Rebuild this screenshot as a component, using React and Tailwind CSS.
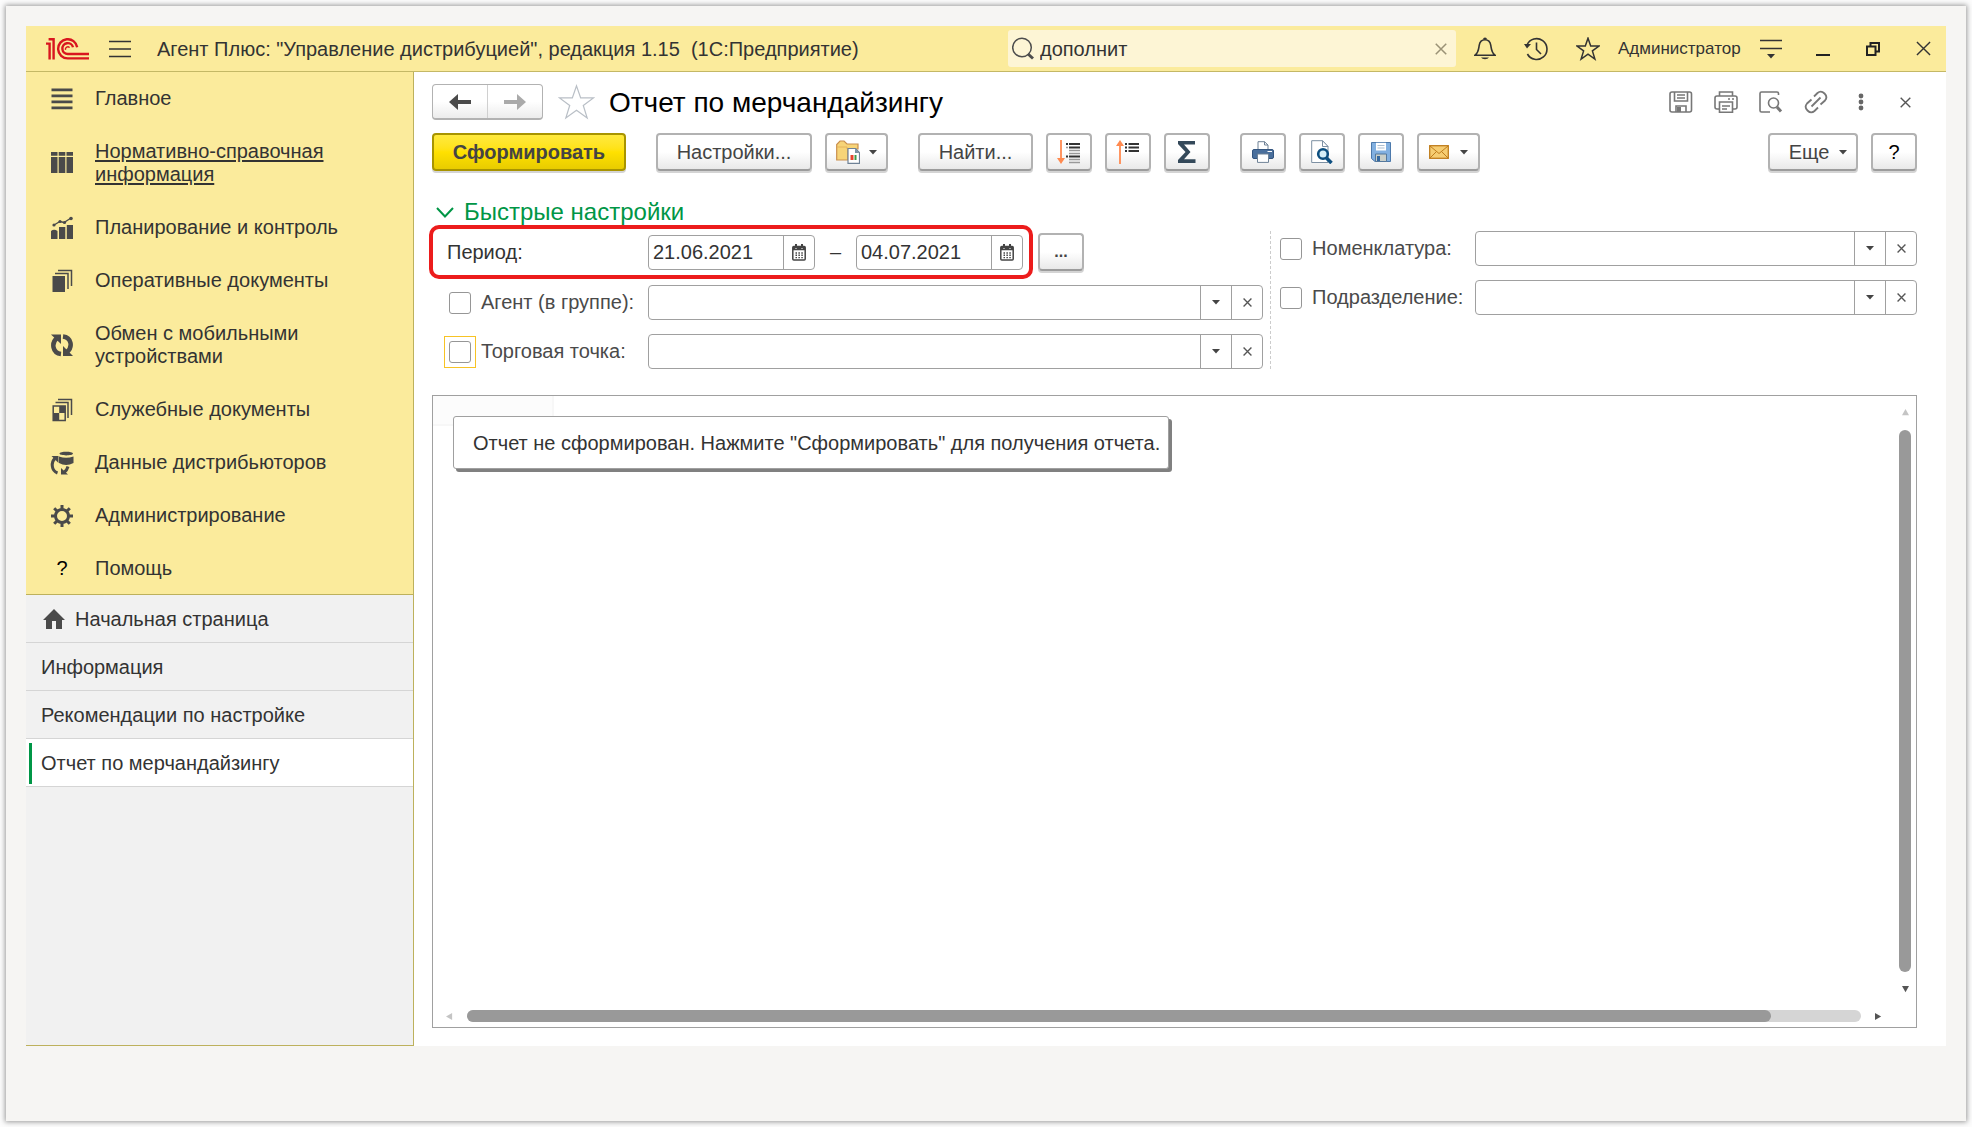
import { useState } from "react";

/* ---------- icons ---------- */

function Logo() {
  return (
    <svg width="44" height="22" viewBox="0 0 44 22" fill="none" stroke="#d9161f" strokeWidth="2.4">
      <path d="M1 5.6H4.6V21.5M3.6 1.2H8.6V21.5" />
      <path d="M32.2 9.2A9.6 9.6 0 1 0 22.8 20.4H44" />
      <path d="M28 9.2A5.4 5.4 0 1 0 22.8 16H44" />
      <path d="M20.5 11.8A2.4 2.4 0 0 1 24.6 9.6" strokeWidth="1.4" />
    </svg>
  );
}

function Burger() {
  return (
    <svg width="22" height="18" viewBox="0 0 22 18" stroke="#333" strokeWidth="1.6">
      <path d="M0 1.5H22M0 9H22M0 16.5H22" />
    </svg>
  );
}

function Cross({ size = 16, color = "#333", width = 1.5 }) {
  return (
    <svg width={size} height={size} viewBox="0 0 16 16" stroke={color} strokeWidth={width}>
      <path d="M1 1L15 15M15 1L1 15" />
    </svg>
  );
}

function Caret() {
  return (
    <svg width="8" height="5" viewBox="0 0 8 5" fill="#444">
      <path d="M0 0H8L4 4.6Z" />
    </svg>
  );
}

function Star({ size, color, width }) {
  return (
    <svg width={size} height={size} viewBox="0 0 24 24" fill="none" stroke={color} strokeWidth={width}>
      <path d="M12 1.2L14.7 9H23L16.4 13.9L18.9 22L12 17.1L5.1 22L7.6 13.9L1 9H9.3Z" />
    </svg>
  );
}

function Magnifier() {
  return (
    <svg width="22" height="23" viewBox="0 0 22 23" fill="none" stroke="#4d4d4d">
      <circle cx="10" cy="10.5" r="9.3" strokeWidth="1.5" />
      <path d="M16 17L21 21.5" strokeWidth="3" />
    </svg>
  );
}

function Bell() {
  return (
    <svg width="22" height="24" viewBox="0 0 22 24" fill="none" stroke="#333" strokeWidth="1.6">
      <path d="M1 18.2C4.6 15.6 4.6 12 5.2 8.4C5.8 4.6 8 2.8 11 2.8S16.2 4.6 16.8 8.4C17.4 12 17.4 15.6 21 18.2Z" />
      <path d="M9 2.6A2 2 0 0 1 13 2.6Z" fill="#333" stroke="none" />
      <path d="M7 20.5H15A4.4 3 0 0 1 7 20.5Z" fill="#333" stroke="none" />
    </svg>
  );
}

function History() {
  return (
    <svg width="24" height="24" viewBox="0 0 24 24" fill="none" stroke="#333" strokeWidth="1.6">
      <path d="M3 8A10.4 10.4 0 1 1 3.4 17" />
      <path d="M12.5 5.5V12.5L17 17" />
      <path d="M0 7H7L3 11.5Z" fill="#333" stroke="none" />
    </svg>
  );
}

function ServiceMenu() {
  return (
    <svg width="22" height="20" viewBox="0 0 22 20" stroke="#333" strokeWidth="1.6">
      <path d="M0 1.5H22M0 9.5H22" />
      <path d="M7 15H15L11 19.5Z" fill="#333" stroke="none" />
    </svg>
  );
}

function Minimize() {
  return (
    <svg width="14" height="16" viewBox="0 0 14 16" stroke="#222" strokeWidth="2">
      <path d="M0 14H14" />
    </svg>
  );
}

function Restore() {
  return (
    <svg width="14" height="14" viewBox="0 0 14 14" fill="none" stroke="#222" strokeWidth="2">
      <path d="M1 4.5H9.5V13H1ZM4.5 4.5V1H13V9.5H9.5" />
    </svg>
  );
}

const side = { width: 24, height: 24, viewBox: "0 0 24 24", fill: "#4a4a4a", className: "shrink-0" };

const sideIcons = {
  main: (
    <svg {...side}>
      <path d="M1.500 1.500H22.500V4.200H1.500ZM1.500 7.500H22.500V10.200H1.500ZM1.500 13.500H22.500V16.200H1.500ZM1.500 19.500H22.500V22.200H1.500Z" />
    </svg>
  ),
  columns: (
    <svg {...side}>
      <path d="M1 1H7.500V4.800H1ZM8.700 1H15.300V4.800H8.700ZM16.500 1H23V4.800H16.500ZM1 6H7.500V22H1ZM8.700 6H15.300V22H8.700ZM16.500 6H23V22H16.500Z" />
    </svg>
  ),
  chart: (
    <svg {...side}>
      <path d="M1 15Q4 12.500 7.500 15V23H1ZM9 11H15.300V23H9ZM16.800 9H23V23H16.800Z" />
      <path d="M4 9L10 5.500L14 6.500L21 2" fill="none" stroke="#4a4a4a" strokeWidth="1.300" />
      <circle cx="4" cy="9" r="1.600" />
      <circle cx="10" cy="5.500" r="1.600" />
      <circle cx="14.500" cy="6.500" r="1.600" />
      <circle cx="21" cy="2.500" r="1.800" />
    </svg>
  ),
  docs: (
    <svg {...side}>
      <path d="M2.500 7H15V23H2.500Z" />
      <path d="M5 4.500H18V20M8 1.500H21.500V17" fill="none" stroke="#4a4a4a" strokeWidth="1.500" />
    </svg>
  ),
  sync: (
    <svg {...side}>
      <path d="M11 21C2.500 20 1 10 7 5" fill="none" stroke="#4a4a4a" strokeWidth="4.500" />
      <path d="M1 1.500H11V11Z" />
      <path d="M13 3.500C21.500 4.500 23 14 17 19" fill="none" stroke="#4a4a4a" strokeWidth="4.500" />
      <path d="M13 13V23H23Z" />
    </svg>
  ),
  service: (
    <svg {...side}>
      <path d="M5.500 4.500H18V20M8 1.500H21.500V17M3.200 8H15.200V22.500H3.200Z" fill="none" stroke="#4a4a4a" strokeWidth="1.500" />
      <path d="M9.200 8H15V15H9.200ZM3.200 15H9.200V22.500H3.200Z" />
    </svg>
  ),
  distributors: (
    <svg {...side}>
      <path d="M9.500 2.500C9.500 0 23 0 23 2.500S9.500 5 9.500 2.500ZM9 5.500Q16 8 23.500 5.500V12Q16 16 9 12Z" />
      <path d="M7.500 22C1 19.500 1 11 5 7.500" fill="none" stroke="#4a4a4a" strokeWidth="3" />
      <path d="M1.500 5H8.500V12Z" />
      <path d="M18 15.500Q17 19 14.500 21" fill="none" stroke="#4a4a4a" strokeWidth="3" />
      <path d="M11 17V23.500H18Z" />
    </svg>
  ),
  gear: (
    <svg {...side} fill="none" stroke="#4a4a4a">
      <circle cx="12" cy="12" r="6.500" strokeWidth="3" />
      <path
        d="M12 1V5M12 19V23M1 12H5M19 12H23M4.200 4.200L7 7M17 17L19.800 19.800M4.200 19.800L7 17M17 7L19.800 4.200"
        strokeWidth="3"
      />
    </svg>
  ),
  help: <span className="text-black">?</span>,
};

function Home() {
  return (
    <svg width="22" height="20" viewBox="0 0 22 20" fill="#4a4a4a">
      <path d="M11 0L22 11H19V20H13V12H9V20H3V11H0Z" />
    </svg>
  );
}

function Arrow({ color, flip }) {
  return (
    <svg width="22" height="16" viewBox="0 0 22 16" fill={color} className={flip ? "rotate-180" : ""}>
      <path d="M0 8L9 0V6H22V10H9V16Z" />
    </svg>
  );
}

function SaveOutline() {
  return (
    <svg width="24" height="22" viewBox="0 0 24 22" fill="none" stroke="#777" strokeWidth="1.600">
      <rect x="1" y="1" width="21.500" height="20" rx="2" />
      <path d="M5.500 1V10H18.500V1M8 4H16M8 7H16M7 21V15H17V21" />
      <path d="M8 16H12V21H8Z" fill="#777" stroke="none" />
    </svg>
  );
}

function PrintOutline() {
  return (
    <svg width="24" height="22" viewBox="0 0 24 22" fill="none" stroke="#777" strokeWidth="1.600">
      <path d="M5.500 5V1H18.500V5M5.500 18H3Q1 18 1 16V7Q1 5 3 5H21Q23 5 23 7V16Q23 18 21 18H18.500" />
      <path d="M5.500 11H18.500V21.200H5.500ZM8 15H16M8 18H13M14 8H16M18 8H20" />
    </svg>
  );
}

function PreviewOutline() {
  return (
    <svg width="24" height="22" viewBox="0 0 24 22" fill="none" stroke="#777" strokeWidth="1.600">
      <path d="M19.500 4V2.500Q19.500 1 18 1H2.500Q1 1 1 2.500V19.500Q1 21 2.500 21H11" />
      <circle cx="14.500" cy="12" r="5" />
      <path d="M18 16L22 20.500" strokeWidth="3" />
    </svg>
  );
}

function LinkOutline() {
  return (
    <svg width="24" height="24" viewBox="0 0 24 24" fill="none" stroke="#777" strokeWidth="1.800">
      <path d="M10 6.500L13.500 3Q17 0 20.500 3.500Q24 7 21 10.500L16.500 14.500M14 17.500L10.500 21Q7 24 3.500 20.500Q0 17 3 13.500L7.500 9.500M7.500 16.500L16.500 7.500" />
    </svg>
  );
}

function FolderReport() {
  return (
    <svg width="24" height="24" viewBox="0 0 24 24">
      <path d="M.7 20V4.500L4 1H8L11 4H22V9H12V20Z" fill="#f7d478" stroke="#c98f4e" strokeWidth="1.200" />
      <path d="M1 7H11V9" fill="none" stroke="#e6b45a" />
      <path d="M12 8.500H19.500L23.500 12.500V23.400H12Z" fill="#fff" stroke="#6f8296" strokeWidth="1.200" />
      <path d="M19 8.500V13H23.500Z" fill="#7d90a3" />
      <path d="M14.500 15H17.500V20H14.500Z" fill="#e8442e" />
      <path d="M18.500 15H20.500V20H18.500Z" fill="#3f9b46" />
    </svg>
  );
}

function Expand() {
  return (
    <svg width="24" height="24" viewBox="0 0 24 24">
      <path d="M4 0V19" stroke="#ff8a50" strokeWidth="1.800" />
      <path d="M0 18H8L4 24Z" fill="#ff8a50" />
      <path d="M9 4H11M12 4H23M12 7.500H23M9 16.500H11M12 16.500H23" stroke="#333" strokeWidth="1.800" />
      <path d="M9 7.500H11M12 10.500H23M12 13.500H23M12 19.500H23M12 22.500H23" stroke="#999" strokeWidth="1.500" />
    </svg>
  );
}

function Collapse() {
  return (
    <svg width="24" height="24" viewBox="0 0 24 24">
      <path d="M4 5V24" stroke="#ff8a50" strokeWidth="1.800" />
      <path d="M0 6H8L4 0Z" fill="#ff8a50" />
      <path d="M9 4H11M12.500 4H23M9 7.500H11M12.500 7.500H23M9 11H11M12.500 11H23" stroke="#333" strokeWidth="1.800" />
    </svg>
  );
}

function Sigma() {
  return (
    <svg width="18" height="22" viewBox="0 0 18 22" fill="#34495a">
      <path d="M0 0H17V3.500H6L12.500 11L6 18.300H17.500V22H0V19L7.500 11L0 3Z" />
    </svg>
  );
}

function Printer() {
  return (
    <svg width="22" height="22" viewBox="0 0 22 22">
      <path d="M6 9V.700H12.500L16 4V9Z" fill="#fff" stroke="#6f8296" />
      <path d="M12.500 .700V4H16" fill="none" stroke="#6f8296" />
      <rect x=".5" y="8.500" width="21" height="9" rx="1.500" fill="#4a6f9c" stroke="#33557f" />
      <path d="M15.500 10.500H20" stroke="#fff" />
      <path d="M5.500 13H16.500V21.400H5.500Z" fill="#fff" stroke="#6f8296" />
    </svg>
  );
}

function Preview() {
  return (
    <svg width="22" height="24" viewBox="0 0 22 24">
      <path d="M.700 .700H11.500L17 6.500V22.500H.700Z" fill="#fff" stroke="#7d90a3" />
      <path d="M11.500 .700V6.500H17Z" fill="#fff" stroke="#7d90a3" />
      <circle cx="12" cy="14" r="4.800" fill="#d5eef8" stroke="#0d4f80" strokeWidth="2.600" />
      <path d="M15.500 18L20.500 23" stroke="#0d4f80" strokeWidth="3.600" />
    </svg>
  );
}

function Floppy() {
  return (
    <svg width="20" height="20" viewBox="0 0 20 20">
      <path d="M.5 .5H19.500V19.500H4L.5 16.500Z" fill="#82b0e0" stroke="#4c79ab" />
      <path d="M5 .800H15V8.500H5Z" fill="#fff" />
      <path d="M6.500 3.500H13.500M6.500 6H13.500" stroke="#aebfd0" />
      <path d="M4.500 12H15.500V19.500H4.500Z" fill="#c9cfc9" stroke="#55789c" />
      <path d="M6 14H9V19H6Z" fill="#3569a0" />
    </svg>
  );
}

function Mail() {
  return (
    <svg width="20" height="14" viewBox="0 0 20 14">
      <rect x=".7" y=".7" width="18.600" height="12.600" fill="#f6cd72" stroke="#c07d1d" strokeWidth="1.300" />
      <path d="M1 1L10 8.500L19 1M1 13L7.500 6.500M19 13L12.500 6.500" fill="none" stroke="#c07d1d" />
    </svg>
  );
}

function Calendar() {
  return (
    <svg width="14" height="17" viewBox="0 0 14 17" fill="none" stroke="#444" strokeWidth="1.500">
      <rect x=".8" y="2.500" width="12.400" height="13.500" rx="1" />
      <path d="M1 4.500H13" strokeWidth="3.500" />
      <path d="M4 0V4M10 0V4" strokeWidth="2" />
      <path d="M3.500 9H10.800M3.500 11.300H10.800M3.500 13.600H10.800" strokeDasharray="1.500 1.400" strokeWidth="1.400" />
      <path d="M3.500 4.500H4.500M9.500 4.500H10.500" stroke="#fff" strokeWidth="1" />
    </svg>
  );
}

function Triangle({ dir, color }) {
  const paths = {
    up: "M0 7H8L4 0Z",
    down: "M0 0H8L4 7Z",
    left: "M7 0V8L0 4Z",
    right: "M0 0V8L7 4Z",
  };
  return (
    <svg width="7" height="7" viewBox="0 0 8 8" fill={color}>
      <path d={paths[dir]} />
    </svg>
  );
}

/* ---------- controls ---------- */

function ToolButton({ label, className, children }) {
  return (
    <button
      type="button"
      aria-label={label}
      className={`flex h-[38px] shrink-0 items-center justify-center rounded-[4px] border-2 border-[#b2b2b2] border-b-[#9c9c9c] bg-linear-to-b from-white from-50% to-[#e9e9e9] text-[#444] shadow-[0_2px_0_#d4d4d4] ${className}`}
    >
      {children}
    </button>
  );
}

function CheckBox({ id, focused }) {
  return (
    <span className={`-m-[5px] flex border p-1 ${focused ? "border-[#f7c325]" : "border-transparent"}`}>
      <input
        id={id}
        type="checkbox"
        className="size-[22px] shrink-0 appearance-none rounded-[3px] border border-[#969696] bg-white"
      />
    </span>
  );
}

function DateField({ label, value, onChange }) {
  return (
    <div className="flex h-[35px] w-[167px] rounded-[4px] border border-[#a0a0a0] bg-white">
      <input
        type="text"
        aria-label={label}
        value={value}
        onChange={(e) => onChange(e.target.value)}
        className="w-0 flex-1 bg-transparent pl-1 outline-none"
      />
      <button
        type="button"
        aria-label={`${label}: календарь`}
        className="flex w-[31px] items-center justify-center border-l border-[#a0a0a0]"
      >
        <Calendar />
      </button>
    </div>
  );
}

function FilterField({ id, label, labelWidth, focused }) {
  return (
    <div className="flex h-[35px] items-center">
      <div className={`flex shrink-0 items-center gap-[10px] ${labelWidth}`}>
        <CheckBox id={`${id}-on`} focused={focused} />
        <label htmlFor={`${id}-on`} className="whitespace-nowrap text-[#4a4a4a]">
          {label}
        </label>
      </div>
      <div className="flex h-full min-w-0 flex-1 rounded-[4px] border border-[#a0a0a0] bg-white">
        <input type="text" aria-label={label} className="min-w-0 flex-1 bg-transparent px-1 outline-none" />
        <button
          type="button"
          aria-label={`${label} выбрать`}
          className="flex w-[31px] items-center justify-center border-l border-[#a0a0a0]"
        >
          <Caret />
        </button>
        <button
          type="button"
          aria-label={`${label} очистить`}
          className="flex w-[31px] items-center justify-center border-l border-[#a0a0a0]"
        >
          <Cross size={9} color="#555" width={2.4} />
        </button>
      </div>
    </div>
  );
}

/* ---------- page parts ---------- */

function TopBar() {
  const [search, setSearch] = useState("дополнит");

  return (
    <header className="flex h-[46px] items-center border-b border-[#c4b866] bg-[#fbeb9c] pr-[15px] pl-[19px]">
      <Logo />
      <button type="button" aria-label="Меню" className="ml-5">
        <Burger />
      </button>
      <h1 className="ml-[26px] flex-1 pt-px whitespace-pre">
        {'Агент Плюс: "Управление дистрибуцией", редакция 1.15  (1С:Предприятие)'}
      </h1>
      <div className="flex h-[37px] w-[448px] items-center rounded-[3px] bg-[#fdf5d5] pr-[9px] pl-1">
        <Magnifier />
        <input
          type="text"
          aria-label="Поиск"
          value={search}
          onChange={(e) => setSearch(e.target.value)}
          className="ml-[6px] min-w-0 flex-1 bg-transparent pt-px outline-none"
        />
        <button type="button" aria-label="Очистить поиск" onClick={() => setSearch("")}>
          <Cross size={12} color="#9a9276" width={2} />
        </button>
      </div>
      <div className="ml-[18px] flex items-center gap-7">
        <button type="button" aria-label="Уведомления">
          <Bell />
        </button>
        <button type="button" aria-label="История">
          <History />
        </button>
        <button type="button" aria-label="Избранное">
          <Star size={24} color="#333" width={1.5} />
        </button>
      </div>
      <a href="#user" className="ml-[18px] w-[122px] text-[17px] leading-5">
        Администратор
      </a>
      <button type="button" aria-label="Сервис" className="ml-5">
        <ServiceMenu />
      </button>
      <div className="ml-[34px] flex items-center gap-9">
        <button type="button" aria-label="Свернуть">
          <Minimize />
        </button>
        <button type="button" aria-label="Восстановить">
          <Restore />
        </button>
        <button type="button" aria-label="Закрыть">
          <Cross size={15} />
        </button>
      </div>
    </header>
  );
}

const sections = [
  { icon: "main", name: "Главное" },
  { icon: "columns", name: "Нормативно-справочная информация", active: true },
  { icon: "chart", name: "Планирование и контроль" },
  { icon: "docs", name: "Оперативные документы" },
  { icon: "sync", name: "Обмен с мобильными устройствами" },
  { icon: "service", name: "Служебные документы" },
  { icon: "distributors", name: "Данные дистрибьюторов" },
  { icon: "gear", name: "Администрирование" },
  { icon: "help", name: "Помощь" },
];

function Sidebar() {
  return (
    <aside className="flex w-[388px] shrink-0 flex-col border-r border-b border-[#bdb15c] bg-[#f1f1f1]">
      <nav className="border-b border-[#bdb15c] bg-[#fbeb9c]">
        {sections.map((s) => (
          <a key={s.name} href={`#${s.icon}`} className="flex items-center py-[15px] pl-6 last:pb-[14px]">
            <span className="flex h-[23px] w-6 shrink-0 items-center justify-center">{sideIcons[s.icon]}</span>
            <span className={`ml-[21px] w-[250px] ${s.active ? "underline underline-offset-2" : ""}`}>{s.name}</span>
          </a>
        ))}
      </nav>
      <nav>
        <a href="#home" className="flex h-12 items-center gap-[10px] border-b border-[#d5d5d5] pt-px pl-[17px]">
          <Home />
          Начальная страница
        </a>
        <a href="#info" className="flex h-12 items-center border-b border-[#d5d5d5] pt-px pl-[15px]">
          Информация
        </a>
        <a href="#tips" className="flex h-12 items-center border-b border-[#d5d5d5] pt-px pl-[15px]">
          Рекомендации по настройке
        </a>
        <a href="#report" className="flex h-12 items-center border-b border-[#d5d5d5] bg-white pt-px pl-[3px]">
          <span className="mr-[9px] h-[41px] w-[3px] bg-[#009646]" />
          Отчет по мерчандайзингу
        </a>
      </nav>
    </aside>
  );
}

function TitleRow() {
  return (
    <div className="flex h-9 items-center">
      <div className="flex h-9 w-[111px] rounded-[4px] border border-b-2 border-[#b2b2b2] bg-linear-to-b from-white from-50% to-[#ececec]">
        <button type="button" aria-label="Назад" className="flex flex-1 items-center justify-center">
          <Arrow color="#4a4a4a" />
        </button>
        <button
          type="button"
          aria-label="Вперед"
          className="flex flex-1 items-center justify-center border-l border-[#d0d0d0]"
        >
          <Arrow color="#aaa" flip />
        </button>
      </div>
      <button type="button" aria-label="В избранное" className="ml-[15px]">
        <Star size={37} color="#b9bfc6" width={0.8} />
      </button>
      <h2 className="ml-[14px] flex-1 pt-px text-[28px] leading-8 text-black">Отчет по мерчандайзингу</h2>
      <div className="flex items-center gap-[21px]">
        <button type="button" aria-label="Сохранить">
          <SaveOutline />
        </button>
        <button type="button" aria-label="Печать">
          <PrintOutline />
        </button>
        <button type="button" aria-label="Просмотр">
          <PreviewOutline />
        </button>
        <button type="button" aria-label="Ссылка">
          <LinkOutline />
        </button>
      </div>
      <button type="button" aria-label="Ещё действия" className="ml-[30px]">
        <svg width="6" height="18" viewBox="0 0 6 18" fill="#666">
          <circle cx="3" cy="3" r="2.4" />
          <circle cx="3" cy="9" r="2.4" />
          <circle cx="3" cy="15" r="2.4" />
        </svg>
      </button>
      <button type="button" aria-label="Закрыть отчет" className="mr-[6px] ml-9">
        <Cross size={11} color="#555" width={2} />
      </button>
    </div>
  );
}

function Toolbar() {
  return (
    <div className="mt-[13px] flex items-center gap-[30px]">
      <button
        type="button"
        className="h-[38px] w-[194px] rounded-[4px] border-2 border-[#a89400] bg-linear-to-b from-[#ffe93c] via-[#ffe100] to-[#e8cc00] font-bold text-[#444] shadow-[0_2px_0_#d4d4d4]"
      >
        Сформировать
      </button>
      <div className="flex gap-[13px]">
        <ToolButton className="w-[156px]">Настройки...</ToolButton>
        <ToolButton label="Варианты отчета" className="w-[63px] gap-[9px]">
          <FolderReport />
          <Caret />
        </ToolButton>
      </div>
      <div className="flex gap-[13px]">
        <ToolButton className="w-[115px]">Найти...</ToolButton>
        <ToolButton label="Развернуть группы" className="w-[46px]">
          <Expand />
        </ToolButton>
        <ToolButton label="Свернуть группы" className="w-[46px]">
          <Collapse />
        </ToolButton>
        <ToolButton label="Сумма" className="w-[46px]">
          <Sigma />
        </ToolButton>
      </div>
      <div className="flex gap-[13px]">
        <ToolButton label="Печать" className="w-[46px]">
          <Printer />
        </ToolButton>
        <ToolButton label="Предварительный просмотр" className="w-[46px]">
          <Preview />
        </ToolButton>
        <ToolButton label="Сохранить" className="w-[46px]">
          <Floppy />
        </ToolButton>
        <ToolButton label="Отправить" className="w-[63px] gap-[11px]">
          <Mail />
          <Caret />
        </ToolButton>
      </div>
      <div className="ml-auto flex gap-[13px]">
        <ToolButton className="w-[90px] gap-[10px] pl-[10px]">
          Еще
          <Caret />
        </ToolButton>
        <ToolButton label="Справка" className="w-[46px]">
          <span className="text-black">?</span>
        </ToolButton>
      </div>
    </div>
  );
}

function QuickSettings() {
  const [from, setFrom] = useState("21.06.2021");
  const [to, setTo] = useState("04.07.2021");

  return (
    <section>
      <h3 className="mt-7 flex h-[26px] items-center gap-[10px] pl-1 text-[24px] leading-[26px] text-[#009646]">
        <svg width="18" height="11" viewBox="0 0 18 11" fill="none" stroke="#009646" strokeWidth="2">
          <path d="M1 1L9 9.500L17 1" />
        </svg>
        Быстрые настройки
      </h3>
      <div className="grid grid-cols-[57fr_44fr]">
        <div className="flex flex-col pr-[7px]">
          <div className="-ml-[3px] flex items-center gap-[5px]">
            {/* period is outlined in red */}
            <div className="flex h-[54px] items-center rounded-[10px] border-4 border-[#ec1c1c] pr-[6px] pl-[14px]">
              <span className="w-[201px]">Период:</span>
              <DateField label="Начало периода" value={from} onChange={setFrom} />
              <span className="w-[41px] text-center">–</span>
              <DateField label="Конец периода" value={to} onChange={setTo} />
            </div>
            <ToolButton label="Выбрать период" className="w-[46px] text-base font-bold">
              ...
            </ToolButton>
          </div>
          <div className="mt-[6px] flex flex-col gap-[14px]">
            <FilterField id="agent" label="Агент (в группе):" labelWidth="w-[216px] pl-[17px]" />
            <FilterField id="shop" label="Торговая точка:" labelWidth="w-[216px] pl-[17px]" focused />
          </div>
        </div>
        <div className="mt-[6px] flex flex-col gap-[14px] border-l border-dashed border-[#ccc]">
          <FilterField id="item" label="Номенклатура:" labelWidth="w-[204px] pl-[9px]" />
          <FilterField id="dept" label="Подразделение:" labelWidth="w-[204px] pl-[9px]" />
        </div>
      </div>
    </section>
  );
}

function Report() {
  return (
    <section className="mt-[26px] flex flex-1 flex-col border border-[#a0a0a0] bg-white pb-[5px]">
      <div className="flex flex-1">
        <div className="relative flex-1">
          <div className="h-[30px] w-[121px] border-r-2 border-b-2 border-[#f7f7f7] bg-[#fcfcfc]" />
          <p className="absolute top-5 left-5 rounded-[3px] border border-[#a0a0a0] bg-white pt-[15px] pr-2 pb-[13px] pl-[19px] whitespace-nowrap shadow-[3px_3px_0_#808080]">
            Отчет не сформирован. Нажмите "Сформировать" для получения отчета.
          </p>
        </div>
        <div className="flex w-[22px] flex-col items-center pt-[13px] pb-[17px]">
          <Triangle dir="up" color="#c4c4c4" />
          <div className="my-[14px] w-3 flex-1 rounded-full bg-[#999]" />
          <Triangle dir="down" color="#555" />
        </div>
      </div>
      <div className="flex h-3 items-center pr-[34px] pl-[13px]">
        <Triangle dir="left" color="#c4c4c4" />
        <div className="mx-[14px] h-3 flex-1 rounded-full bg-[#d5d5d5]">
          <div className="h-3 w-29/31 rounded-full bg-[#999]" />
        </div>
        <Triangle dir="right" color="#555" />
      </div>
    </section>
  );
}

export default function App() {
  return (
    <div className="flex min-h-screen flex-col bg-[#fcfcfc] p-[6px] font-['Liberation_Sans',Arial,sans-serif] text-[20px] leading-[23px] text-[#333]">
      <div className="flex flex-1 flex-col bg-[#f6f5f3] p-5 pb-[75px] shadow-[0_0_5px_1px_#999]">
        <div className="flex flex-1 flex-col bg-white">
          <TopBar />
          <div className="flex flex-1">
            <Sidebar />
            <main className="flex min-w-0 flex-1 flex-col pt-3 pr-[29px] pb-[18px] pl-[18px]">
              <TitleRow />
              <Toolbar />
              <QuickSettings />
              <Report />
            </main>
          </div>
        </div>
      </div>
    </div>
  );
}
